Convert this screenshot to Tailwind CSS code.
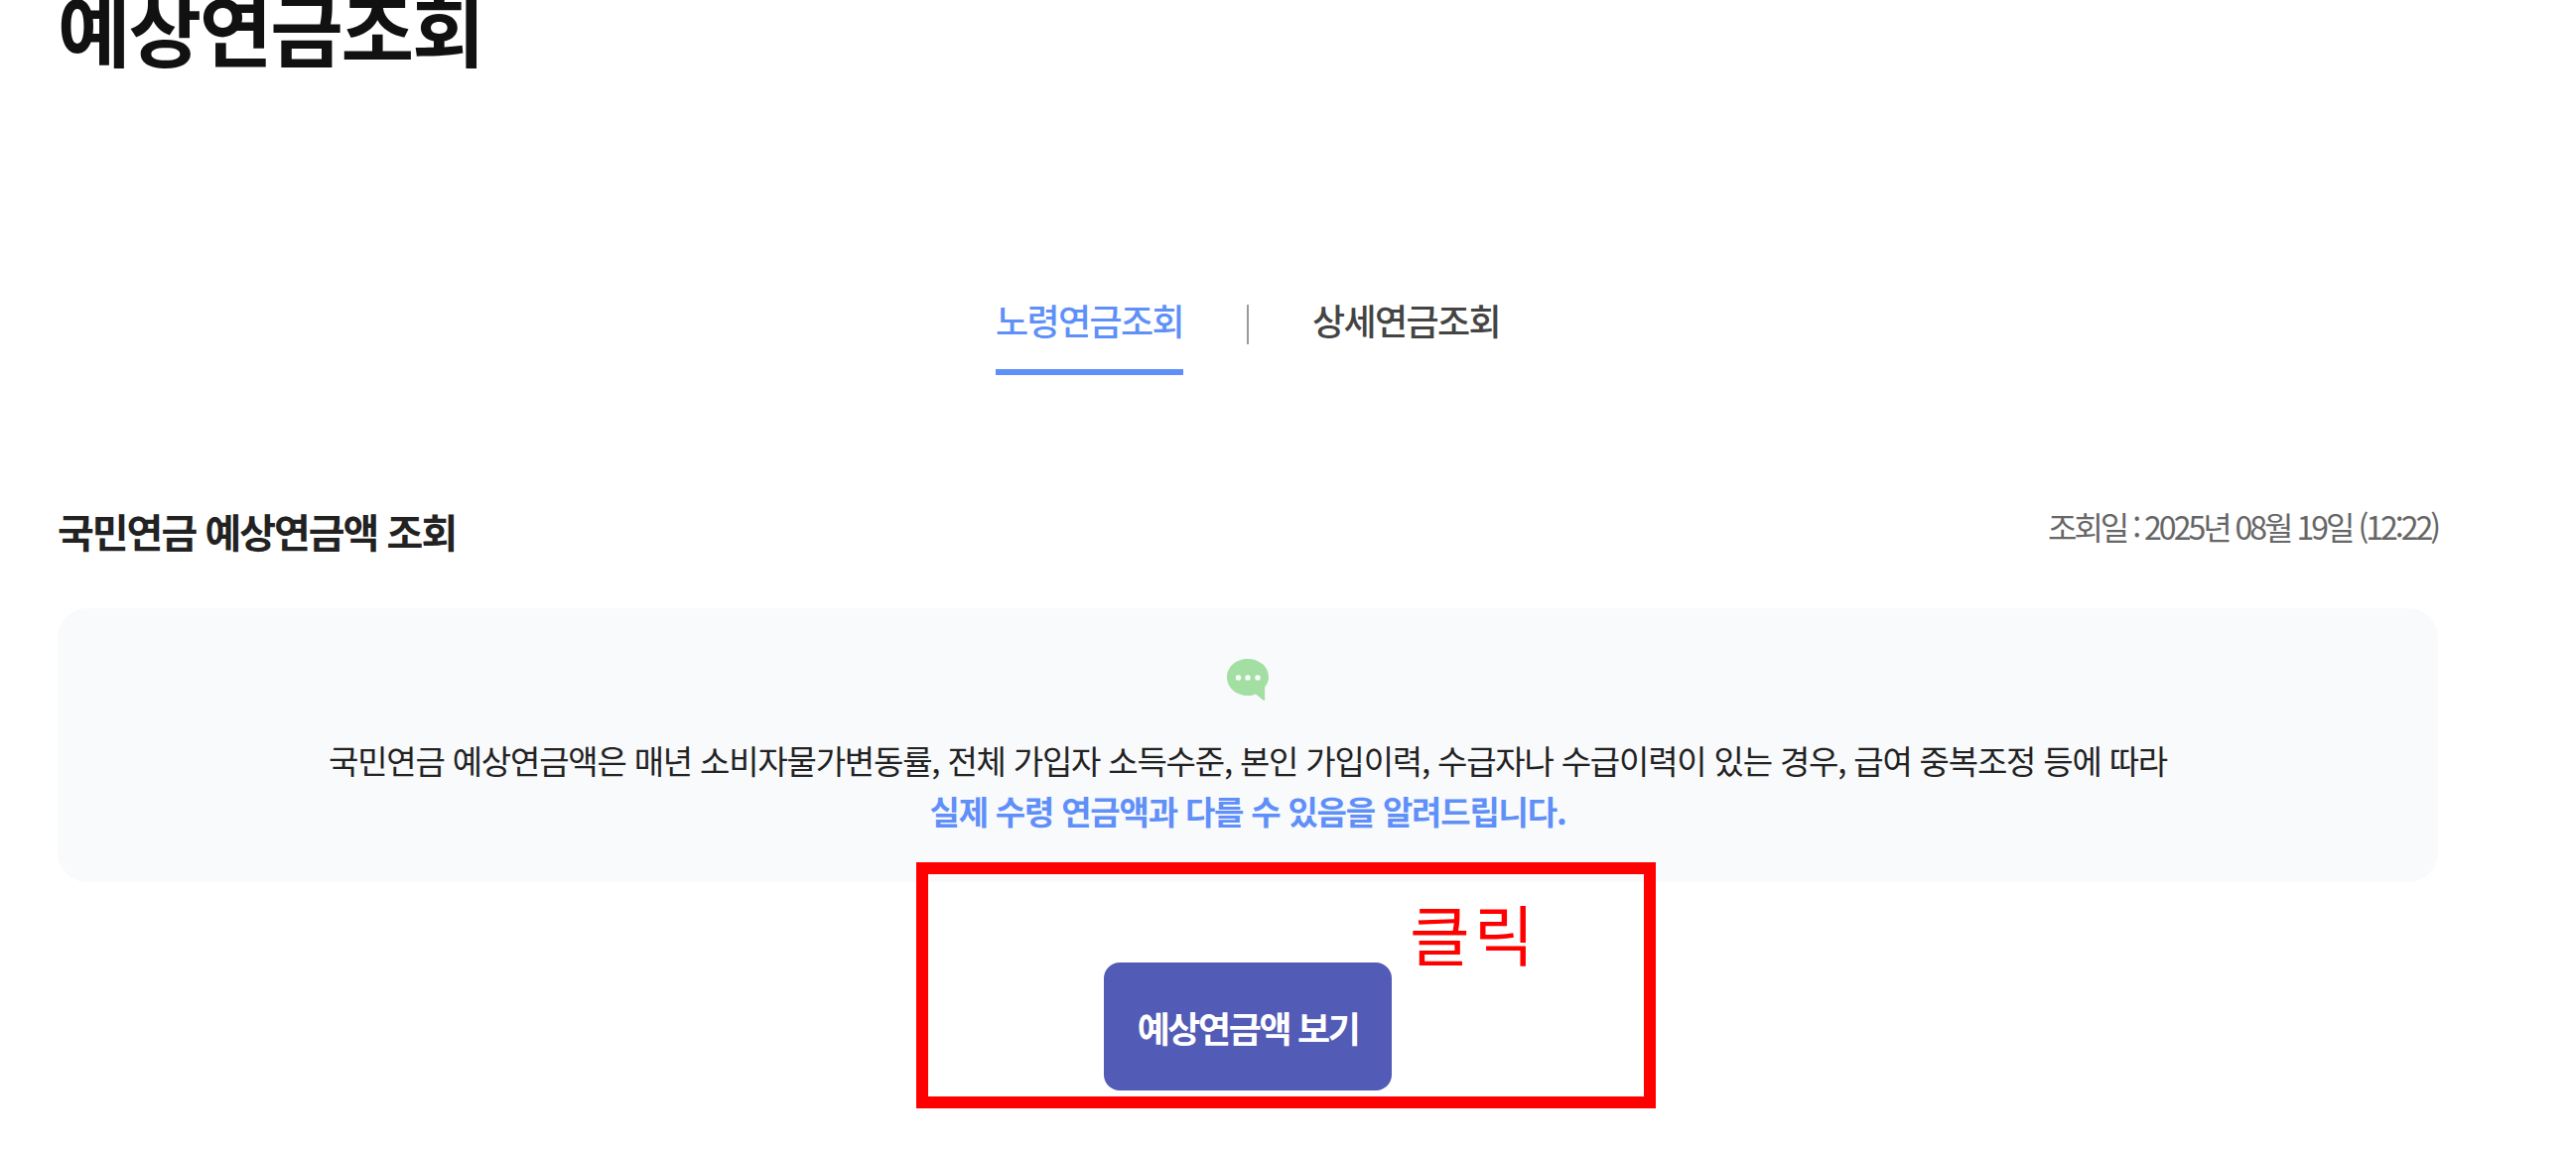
<!DOCTYPE html>
<html lang="ko">
<head>
  <meta charset="UTF-8">
  <title>예상연금조회</title>
  <script src="https://cdn.jsdelivr.net/npm/@tailwindcss/browser@4"></script>
</head>
<body class="bg-white h-[1163px] overflow-hidden relative font-['Noto_Sans_CJK_KR','Noto_Sans',sans-serif]">

  <main class="w-[2398px] ml-[58px]">
    <!-- Title, scrolled partly out of view -->
    <h1 class="h-[68px] flex items-end text-[80px] leading-[100px] font-bold tracking-[-2.2px] text-[#111]"><span class="mb-[-8px]">예상연금조회</span></h1>

    <!-- Tabs -->
    <nav class="mt-[226px] h-[84px] flex justify-center items-start">
      <a href="#" class="h-[84px] w-[189px] border-b-[6px] border-[#5f8ff8] text-[#5f8ff8] text-[36px] font-medium leading-[56px] tracking-[-1.6px] text-center whitespace-nowrap">노령연금조회</a>
      <span class="w-[2px] h-[40px] mt-[13px] mx-[64px] bg-[#999]"></span>
      <a href="#" class="h-[84px] w-[189px] text-[#444] text-[36px] font-medium leading-[56px] tracking-[-1.6px] text-center whitespace-nowrap">상세연금조회</a>
    </nav>

    <!-- Section head -->
    <div class="mt-[130px] h-[48px] flex justify-between items-start">
      <h2 class="text-[40px] leading-[54px] font-bold tracking-[-2px] text-[#222]">국민연금 예상연금액 조회</h2>
      <p class="text-[32px] leading-[44px] tracking-[-3px] text-[#666]">조회일 : 2025년 08월 19일 (12:22)</p>
    </div>

    <!-- Notice -->
    <section class="mt-[57px] h-[276px] bg-[#f9fafc] rounded-[30px] flex flex-col items-center pt-[51px]">
      <svg class="w-[42px] h-[42px]" viewBox="0 0 42 42">
        <path d="M21 0C9.4 0 0 7.9 0 18.5S9.4 37 21 37c3 0 5.5-.5 8-1.5L37 42c.6.3 1.1 0 1.100-.7V28.500C40.500 25.500 42 22.200 42 18.500 42 7.900 32.600 0 21 0z" fill="#a3dfa3"/>
        <circle cx="11.500" cy="19" r="2.700" fill="#fff"/>
        <circle cx="21" cy="19" r="2.700" fill="#fff"/>
        <circle cx="31" cy="19" r="2.700" fill="#fff"/>
      </svg>
      <p class="mt-[35px] text-[33px] leading-[51px] tracking-[-1.2px] text-[#222] text-center whitespace-nowrap">
        국민연금 예상연금액은 매년 소비자물가변동률, 전체 가입자 소득수준, 본인 가입이력, 수급자나 수급이력이 있는 경우, 급여 중복조정 등에 따라<br>
        <b class="font-bold text-[#5f8ff8]">실제 수령 연금액과 다를 수 있음을 알려드립니다.</b>
      </p>
    </section>

    <!-- Action -->
    <div class="mt-[81px] flex justify-center">
      <button class="w-[290px] h-[129px] rounded-[16px] bg-[#525bb5] text-white text-[36px] font-bold tracking-[-2.4px]">예상연금액 보기</button>
    </div>
  </main>

  <!-- Annotation laid over the screenshot -->
  <div class="absolute left-[923px] top-[869px] w-[745px] h-[248px] border-[12px] border-[#ff0000]"></div>
  <span class="absolute left-[1420px] top-[892px] text-[66px] leading-[94px] tracking-[4px] text-[#ff0000]">클릭</span>

</body>
</html>
